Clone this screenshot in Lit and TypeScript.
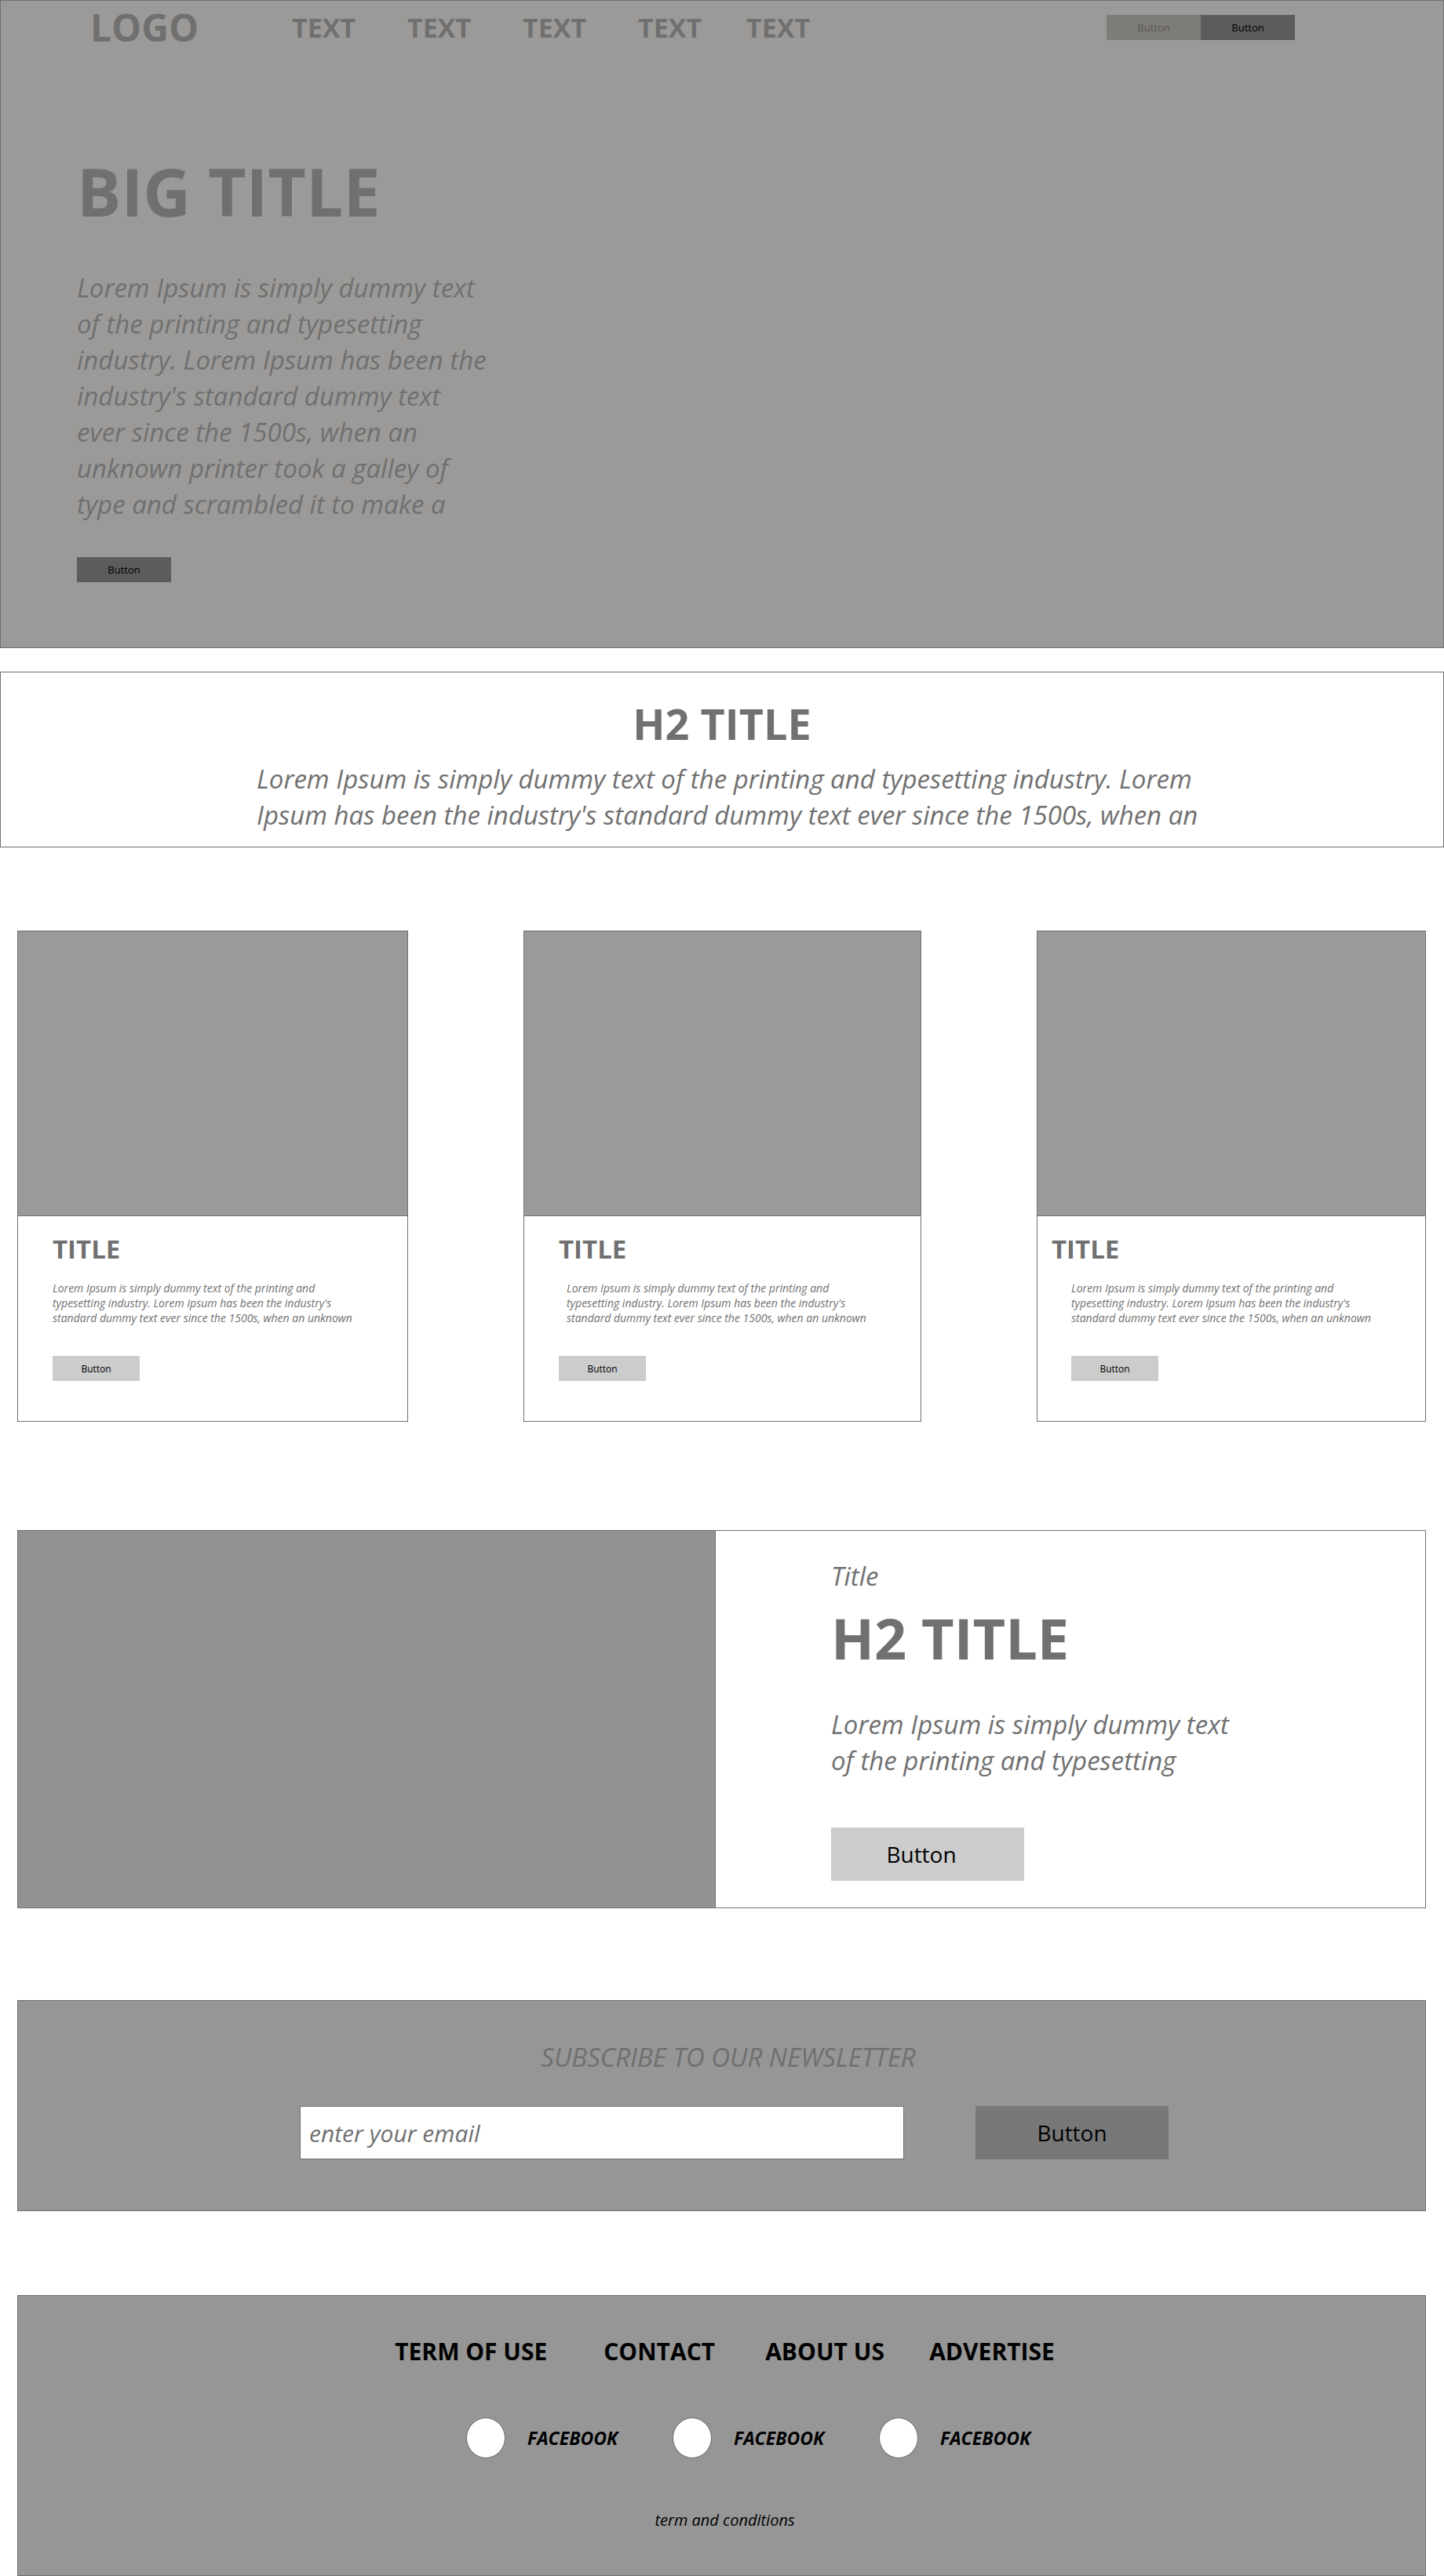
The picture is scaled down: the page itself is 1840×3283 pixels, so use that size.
import { LitElement, html, css } from "lit";
import { customElement } from "lit/decorators.js";

const navItems = ["TEXT", "TEXT", "TEXT", "TEXT", "TEXT"];
const cards = ["first", "second", "third"];
const footerLinks = ["TERM OF USE", "CONTACT", "ABOUT US", "ADVERTISE"];
const socials = ["FACEBOOK", "FACEBOOK", "FACEBOOK"];

@customElement("app-root")
export class AppRoot extends LitElement {
  static styles = css`
    :host {
      display: block;
      background: #fff;
      color: #707070;
      font-family: "Open Sans", "Noto Sans", sans-serif;
    }
    * {
      box-sizing: border-box;
    }
    h1, h2, h3, p {
      margin: 0;
      font-weight: 700;
    }
    a {
      color: inherit;
      text-decoration: none;
    }
    button {
      border: 0;
      padding: 0;
      font-family: inherit;
      color: #000;
      background: #ccc;
    }
    .lead {
      font-size: 33px;
      line-height: 46px;
      font-style: italic;
      font-weight: 400;
    }
    .btn-small {
      width: 120px;
      height: 32px;
      font-size: 13px;
      background: #5c5c5c;
    }
    .btn-muted {
      background: #7e7c79;
      color: #5a5957;
    }
    .btn-large {
      width: 246px;
      height: 68px;
      font-size: 28px;
    }

    .hero {
      border: 1px solid #707070;
      background: #9c9a98;
      padding-bottom: 83px;
    }
    .topbar {
      display: flex;
      align-items: center;
      padding: 2px 189px 0 114px;
    }
    .logo {
      width: 257px;
      font-size: 48px;
      line-height: 64px;
      font-weight: 700;
    }
    .nav {
      display: grid;
      grid-template-columns: repeat(3, 147px) 138px auto;
      font-size: 34px;
      line-height: 44px;
      font-weight: 700;
    }
    .actions {
      display: flex;
      margin-left: auto;
    }
    .hero-copy {
      display: flex;
      flex-direction: column;
      align-items: flex-start;
      padding: 121px 97px 0;
    }
    .hero-title {
      font-size: 84px;
      line-height: 112px;
      margin-bottom: 44px;
    }
    .hero-copy .lead {
      margin-bottom: 44px;
    }

    .intro {
      margin-top: 30px;
      border: 1px solid #707070;
      padding: 29px 0 17px;
    }
    .intro-title {
      font-size: 54px;
      line-height: 72px;
      text-align: center;
      margin-bottom: 12px;
    }
    .intro .lead {
      padding-left: 326px;
    }

    .content {
      padding: 106px 23px 0 22px;
    }
    .cards {
      display: grid;
      grid-template-columns: 498fr 507fr 496fr;
      gap: 147px;
    }
    .card {
      border: 1px solid #707070;
    }
    .card-image {
      height: 363px;
      background: #9c9a98;
      border-bottom: 1px solid #707070;
    }
    .card-body {
      display: flex;
      flex-direction: column;
      align-items: flex-start;
      padding: 20px 0 51px 44px;
    }
    .card-title {
      font-size: 33px;
      line-height: 44px;
      margin-bottom: 18px;
    }
    .card-text {
      font-size: 14px;
      line-height: 19px;
      font-style: italic;
      font-weight: 400;
      margin-bottom: 39px;
      white-space: nowrap;
    }
    .btn-card {
      width: 111px;
      height: 32px;
      font-size: 12px;
    }
    .second .card-text {
      margin-left: 10px;
    }
    .third .card-body {
      padding-left: 18px;
    }
    .third .card-text,
    .third .btn-card {
      margin-left: 25px;
    }

    .feature {
      display: grid;
      grid-template-columns: 890fr 905fr;
      margin-top: 138px;
      border: 1px solid #707070;
    }
    .feature-image {
      background: #929292;
      border-right: 1px solid #707070;
    }
    .feature-body {
      display: flex;
      flex-direction: column;
      align-items: flex-start;
      padding: 35px 0 34px 147px;
    }
    .feature-title {
      font-size: 72px;
      line-height: 96px;
      margin: 7px 0 40px;
    }
    .feature-body .btn-large {
      margin-top: 62px;
      padding-right: 16px;
    }

    .newsletter {
      margin-top: 117px;
      border: 1px solid #707070;
      background: #969696;
      padding: 49px 0 65px;
    }
    .newsletter-title {
      display: block;
      text-align: center;
      padding-left: 17px;
      margin-bottom: 39px;
    }
    .newsletter-row {
      display: flex;
      gap: 91px;
      padding-left: 359px;
    }
    .email {
      flex: 0 1 770px;
      min-width: 0;
      height: 68px;
      border: 1px solid #707070;
      border-radius: 0;
      padding: 0 11px;
      background: #fff;
      font-family: inherit;
      font-size: 30px;
      font-style: italic;
      color: #707070;
    }
    .email::placeholder {
      color: #707070;
      opacity: 1;
    }
    .newsletter .btn-large {
      background: #787878;
    }

    .footer {
      display: flex;
      flex-direction: column;
      align-items: center;
      margin-top: 107px;
      border: 1px solid #707070;
      background: #969696;
      color: #000;
      padding: 52px 0 55px 8px;
    }
    .footer-links {
      display: grid;
      grid-template-columns: 266px 206px 209px auto;
      font-size: 30px;
      line-height: 38px;
      font-weight: 700;
    }
    .socials {
      display: grid;
      grid-template-columns: 263px 263px auto;
      margin: 65px 0 64px 60px;
    }
    .social {
      display: flex;
      align-items: center;
      gap: 28px;
      font-size: 23px;
      line-height: 30px;
      font-weight: 700;
      font-style: italic;
    }
    .dot {
      width: 50px;
      height: 52px;
      border: 1px solid #707070;
      border-radius: 50%;
      background: #fff;
    }
    .terms {
      font-size: 20px;
      line-height: 30px;
      font-style: italic;
    }
  `;

  private renderCard(name: string) {
    return html`
      <article class="card ${name}">
        <div class="card-image"></div>
        <div class="card-body">
          <h3 class="card-title">TITLE</h3>
          <p class="card-text">
            Lorem Ipsum is simply dummy text of the printing and<br />
            typesetting industry. Lorem Ipsum has been the industry's<br />
            standard dummy text ever since the 1500s, when an unknown
          </p>
          <button class="btn-card" type="button">Button</button>
        </div>
      </article>
    `;
  }

  render() {
    return html`
      <header class="hero">
        <div class="topbar">
          <a class="logo" href="#">LOGO</a>
          <nav class="nav">
            ${navItems.map((label) => html`<a href="#">${label}</a>`)}
          </nav>
          <div class="actions">
            <button class="btn-small btn-muted" type="button">Button</button>
            <button class="btn-small" type="button">Button</button>
          </div>
        </div>
        <div class="hero-copy">
          <h1 class="hero-title">BIG TITLE</h1>
          <p class="lead">
            Lorem Ipsum is simply dummy text<br />
            of the printing and typesetting<br />
            industry. Lorem Ipsum has been the<br />
            industry's standard dummy text<br />
            ever since the 1500s, when an<br />
            unknown printer took a galley of<br />
            type and scrambled it to make a
          </p>
          <button class="btn-small" type="button">Button</button>
        </div>
      </header>

      <section class="intro">
        <h2 class="intro-title">H2 TITLE</h2>
        <p class="lead">
          Lorem Ipsum is simply dummy text of the printing and typesetting industry. Lorem<br />
          Ipsum has been the industry's standard dummy text ever since the 1500s, when an
        </p>
      </section>

      <main class="content">
        <section class="cards">${cards.map((name) => this.renderCard(name))}</section>

        <section class="feature">
          <div class="feature-image"></div>
          <div class="feature-body">
            <p class="lead">Title</p>
            <h2 class="feature-title">H2 TITLE</h2>
            <p class="lead">
              Lorem Ipsum is simply dummy text<br />
              of the printing and typesetting
            </p>
            <button class="btn-large" type="button">Button</button>
          </div>
        </section>

        <form class="newsletter">
          <label class="newsletter-title lead" for="email">SUBSCRIBE TO OUR NEWSLETTER</label>
          <div class="newsletter-row">
            <input class="email" id="email" type="email" placeholder="enter your email" />
            <button class="btn-large" type="button">Button</button>
          </div>
        </form>

        <footer class="footer">
          <nav class="footer-links">
            ${footerLinks.map((label) => html`<a href="#">${label}</a>`)}
          </nav>
          <div class="socials">
            ${socials.map(
              (label) => html`<a class="social" href="#"><span class="dot"></span>${label}</a>`
            )}
          </div>
          <a class="terms" href="#">term and conditions</a>
        </footer>
      </main>
    `;
  }
}
